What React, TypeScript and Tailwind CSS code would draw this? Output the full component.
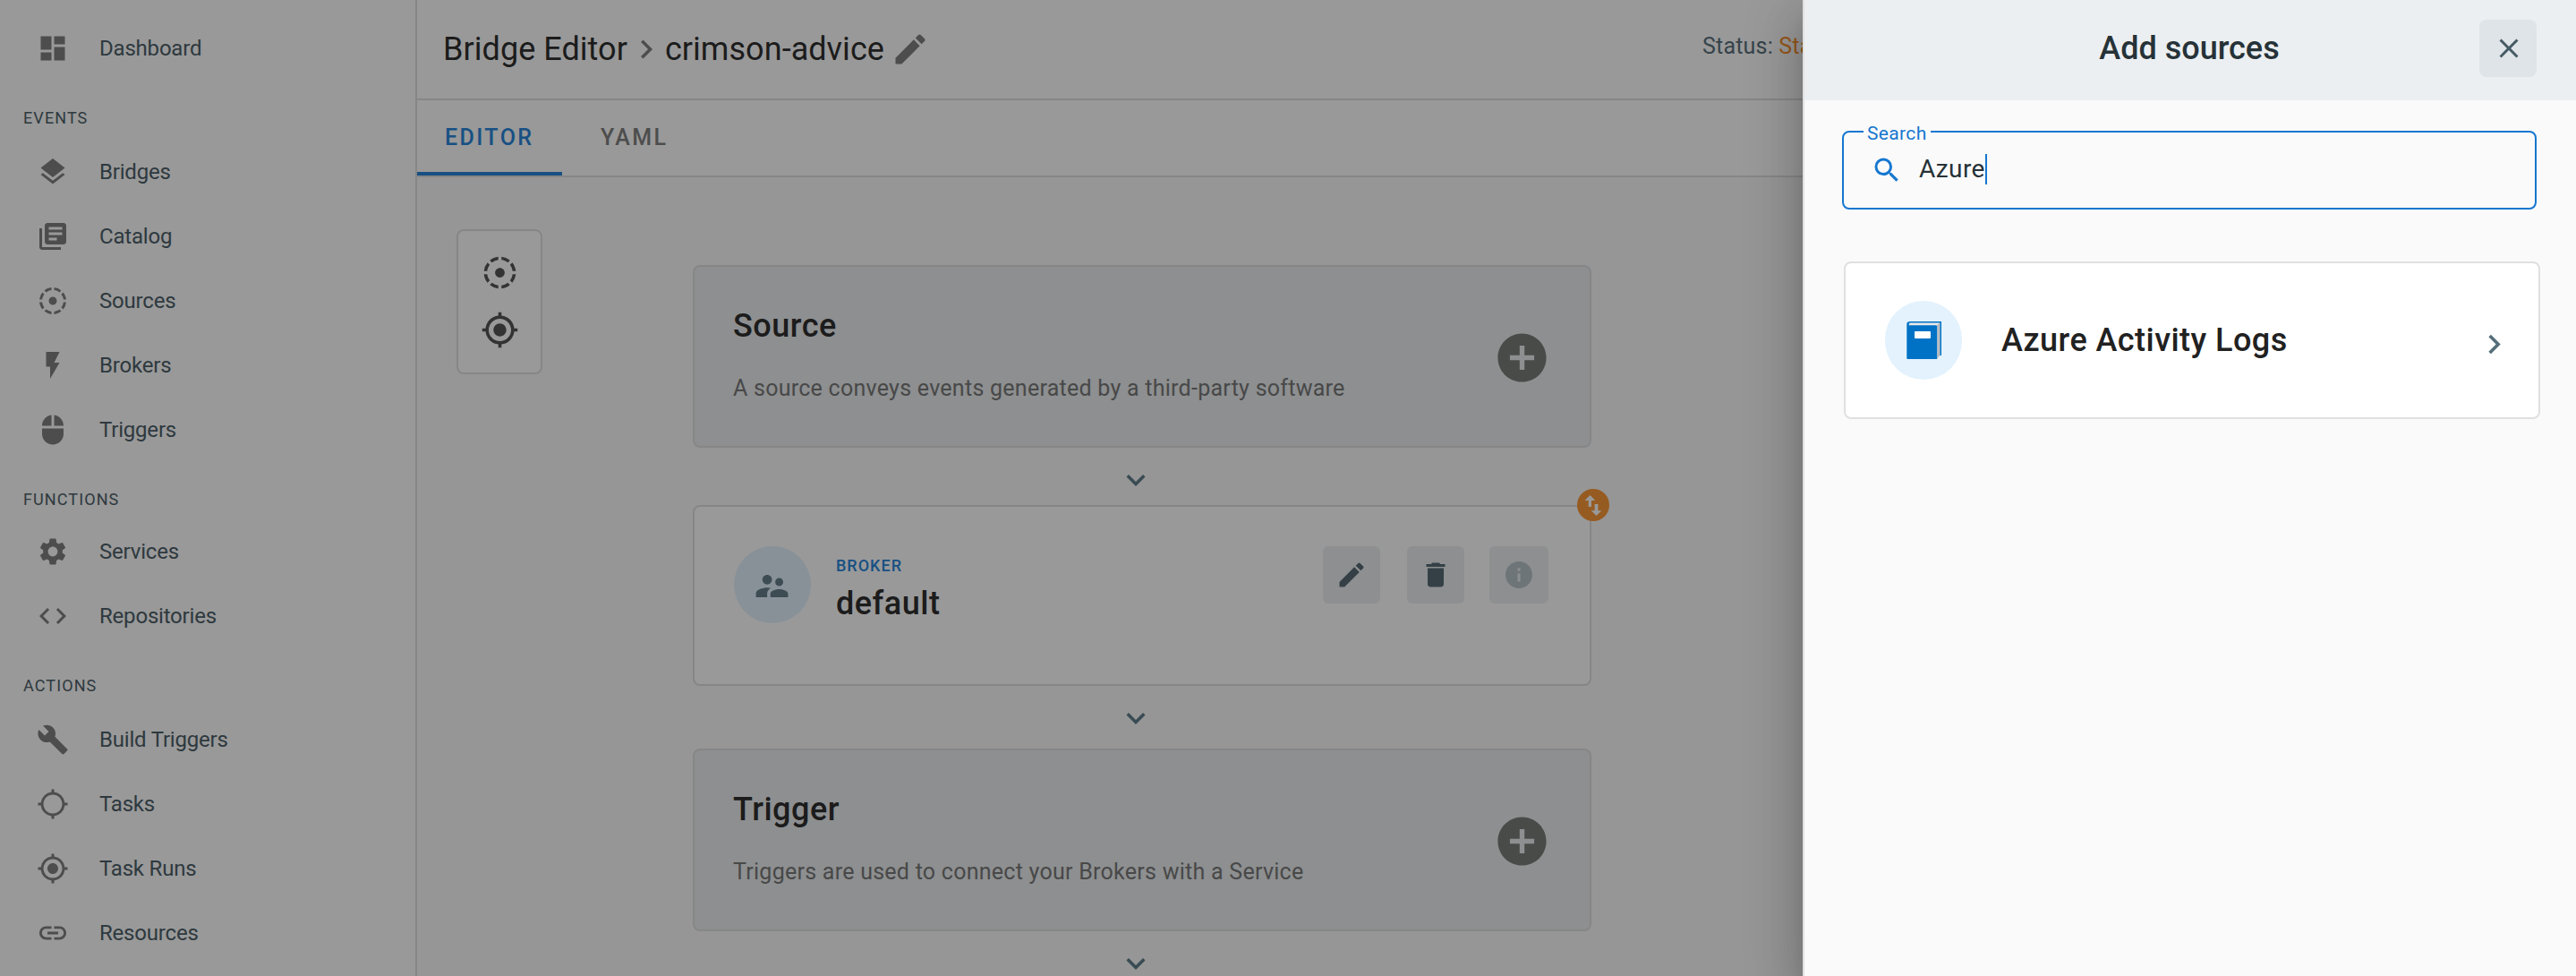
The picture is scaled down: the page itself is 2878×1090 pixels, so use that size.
import React from "react";
import {
  MdAddCircle,
  MdBuild,
  MdCode,
  MdDashboard,
  MdDelete,
  MdEdit,
  MdExpandMore,
  MdChevronRight,
  MdFilterTiltShift,
  MdFlashOn,
  MdGpsFixed,
  MdGpsNotFixed,
  MdInfo,
  MdLayers,
  MdLibraryBooks,
  MdLink,
  MdMouse,
  MdSearch,
  MdSettings,
  MdSupervisorAccount,
  MdClose,
} from "react-icons/md";
import type { IconType } from "react-icons";

type Item = { label: string; icon: IconType };

const topItem: Item = { label: "Dashboard", icon: MdDashboard };

const groups: { title: string; titleClass: string; items: Item[] }[] = [
  {
    title: "EVENTS",
    titleClass: "h-[66px]",
    items: [
      { label: "Bridges", icon: MdLayers },
      { label: "Catalog", icon: MdLibraryBooks },
      { label: "Sources", icon: MdFilterTiltShift },
      { label: "Brokers", icon: MdFlashOn },
      { label: "Triggers", icon: MdMouse },
    ],
  },
  {
    title: "FUNCTIONS",
    titleClass: "h-[64px]",
    items: [
      { label: "Services", icon: MdSettings },
      { label: "Repositories", icon: MdCode },
    ],
  },
  {
    title: "ACTIONS",
    titleClass: "h-[66px]",
    items: [
      { label: "Build Triggers", icon: MdBuild },
      { label: "Tasks", icon: MdGpsNotFixed },
      { label: "Task Runs", icon: MdGpsFixed },
      { label: "Resources", icon: MdLink },
    ],
  },
];

function NavItem({ label, icon: Icon }: Item) {
  return (
    <a className="flex h-[72px] items-center pl-[41px]">
      <Icon className="size-9 text-[#808080]" />
      <span className="ml-[34px] text-[24px] leading-[36px] tracking-[-0.2px] text-[#4d6069]">{label}</span>
    </a>
  );
}

function Sidebar() {
  return (
    <nav className="flex h-full w-[466px] shrink-0 flex-col border-r-2 border-[#e0e0e0] bg-white pt-[18px]">
      <NavItem {...topItem} />
      {groups.map((g) => (
        <section key={g.title}>
          <div className={g.titleClass}>
            <h2 className="pt-[29px] pl-[26px] text-[18px] leading-[26px] tracking-[1.1px] text-[#4d6069]">{g.title}</h2>
          </div>
          {g.items.map((i) => (
            <NavItem key={i.label} {...i} />
          ))}
        </section>
      ))}
    </nav>
  );
}

function Header() {
  return (
    <header className="flex h-[112px] items-center border-b-2 border-[#e0e0e0] bg-white pl-[29px]">
      <h1 className="flex items-center text-[36px] leading-[44px] tracking-[0.05px] text-[#303030]">
        <span>Bridge Editor</span>
        <MdChevronRight className="size-[42px] text-[#808080]" />
        <span>crimson-advice</span>
        <MdEdit className="ml-[7px] size-[44px] text-[#808080]" />
      </h1>
      <p className="mt-[-6px] ml-[863px] text-[25px] leading-[36px] tracking-[0.2px] whitespace-nowrap text-[#5b727d]">
        Status: <span className="text-[#fb9130]">Starting</span>
      </p>
    </header>
  );
}

function Tabs() {
  return (
    <div className="flex h-[86px] border-b-2 border-[#e0e0e0] bg-white text-[25px] leading-[84px] font-medium tracking-[2.4px]">
      <div className="w-[162px] border-b-4 border-[#2886da] pl-[31px] text-[#2886da]">EDITOR</div>
      <div className="pl-[43px] text-[#808080]">YAML</div>
    </div>
  );
}

function EmptyCard({ title, text }: { title: string; text: string }) {
  return (
    <div className="flex h-[204px] w-[1004px] items-center justify-between rounded-[8px] border-2 border-[#e0e0e0] bg-[#eceff1] pr-[43px] pl-[43px]">
      <div className="mt-[-3px]">
        <h3 className="text-[36px] leading-[44px] font-medium tracking-[0.5px] text-[#303030]">{title}</h3>
        <p className="mt-[30px] text-[25px] leading-[36px] tracking-[0.26px] text-[#797979]">{text}</p>
      </div>
      <MdAddCircle className="mt-[2px] size-[65px] text-[#7b7d7b]" />
    </div>
  );
}

function Arrow() {
  return <MdExpandMore className="mr-[14px] size-[42px] text-[#607d8b]" />;
}

function ActionButton({ icon: Icon, muted }: { icon: IconType; muted?: boolean }) {
  return (
    <button
      className={
        muted
          ? "flex h-16 w-[66px] items-center justify-center rounded-[6px] bg-[#eceff1] text-[#b8c4ca]"
          : "flex size-16 items-center justify-center rounded-[6px] bg-[#eceff1] text-[#586c76]"
      }
    >
      <Icon className="size-9" />
    </button>
  );
}

function BrokerCard() {
  return (
    <div className="relative flex h-[202px] w-[1004px] rounded-[8px] border-2 border-[#e0e0e0] bg-white pt-[44px] pr-[46px] pl-[44px]">
      <div className="flex size-[86px] items-center justify-center rounded-full bg-[#e3f2fd]">
        <MdSupervisorAccount className="mt-[3px] mr-[2px] size-[43px] text-[#677f8a]" />
      </div>
      <div className="ml-[28px] pt-[8px]">
        <div className="text-[18px] leading-[28px] font-medium tracking-[1px] text-[#2886da]">BROKER</div>
        <div className="mt-[6px] text-[36px] leading-[44px] font-medium tracking-[0.5px] text-[#303030]">default</div>
      </div>
      <div className="ml-auto flex">
        <ActionButton icon={MdEdit} />
        <div className="ml-[30px] flex gap-[28px]">
          <ActionButton icon={MdDelete} />
          <ActionButton icon={MdInfo} muted />
        </div>
      </div>
      <div className="absolute -top-[20px] -right-[22px] flex size-[36px] items-center justify-center rounded-full bg-[#fb9837]">
        <svg viewBox="0 0 36 36" className="size-[36px]" fill="#ffffff">
          <path d="M14.5 7 8.5 13H12.7V20H16V13H20.3ZM23.4 24.2V17H19.6V24.2H15.6L21.5 30 27.3 24.2Z" />
        </svg>
      </div>
    </div>
  );
}

function Editor() {
  return (
    <main className="relative min-h-0 flex-1 bg-[#fafafa]">
      <div className="absolute top-[58px] left-[44px] flex h-[162px] w-[96px] flex-col items-center gap-[21px] rounded-[8px] border-2 border-[#e0e0e0] bg-white pt-[25px] text-[#555555]">
        <MdFilterTiltShift className="size-[43px]" />
        <MdGpsFixed className="size-[43px]" />
      </div>
      <div className="ml-[308px] flex w-[1004px] flex-col items-center pt-[98px]">
        <EmptyCard title="Source" text="A source conveys events generated by a third-party software" />
        <div className="flex h-16 items-center pt-[8px]">
          <Arrow />
        </div>
        <BrokerCard />
        <div className="flex h-[70px] items-center pt-[2px]">
          <Arrow />
        </div>
        <EmptyCard title="Trigger" text="Triggers are used to connect your Brokers with a Service" />
        <div className="flex h-[50px] shrink-0 items-start overflow-hidden pt-[15px]">
          <Arrow />
        </div>
      </div>
    </main>
  );
}

function BookIcon() {
  return (
    <svg viewBox="0 0 39 42" className="h-[42px] w-[39px]">
      <path d="M3 0H39V38H36L2 4Z" fill="#0072c6" />
      <path d="M3.5 1.5H37.3V38L35 41.5H33V4.5H2.5Z" fill="#e8e8e8" />
      <path d="M34.4 4 37.3 1.5V38L34.4 41.5Z" fill="#b8babc" />
      <path d="M3 0C1 0.4 0.3 1.6 0.3 3.2V40.5C0.3 41.5 0.8 42 1.8 42H34.2V4.6H3.6C2.4 4.6 2 4 2.6 3.2Z" fill="#0072c6" />
      <rect x="9" y="11" width="18" height="8" rx="1" fill="#ffffff" />
    </svg>
  );
}

function Panel() {
  return (
    <aside className="absolute inset-y-0 right-0 flex w-[864px] flex-col border-l-2 border-[#e0e0e0] bg-[#fafafa] shadow-[0_16px_20px_-10px_rgba(0,0,0,0.2),0_32px_48px_4px_rgba(0,0,0,0.14),0_12px_60px_10px_rgba(0,0,0,0.12)]">
      <div className="flex h-[112px] items-center bg-[#eceff1] pr-[44px] pb-[4px]">
        <h2 className="ml-[106px] flex-1 text-center text-[36px] leading-[44px] font-medium text-[#263238]">Add sources</h2>
        <button className="flex size-16 items-center justify-center rounded-[8px] bg-[#dfe4e8] text-[#455a64]">
          <MdClose className="ml-px size-[36px]" />
        </button>
      </div>
      <div className="relative mt-[34px] ml-[42px] flex h-[88px] w-[776px] items-center rounded-[8px] border-2 border-[#1577d0] pl-[30px]">
        <label className="absolute -top-[14px] left-[22px] bg-[#fafafa] px-[4px] text-[21px] leading-[30px] tracking-[0.35px] text-[#1577d0]">
          Search
        </label>
        <MdSearch className="mt-[-1px] size-[36px] text-[#1577d0]" />
        <span className="mt-[-3px] ml-[18px] text-[28px] leading-[34px] tracking-[0.4px] text-[#263238]">Azure</span>
        <span className="mt-[-2px] h-[34px] w-[2px] bg-[#1577d0]" />
      </div>
      <div className="mt-[58px] ml-[44px] flex h-[176px] w-[778px] items-center rounded-[8px] border-2 border-[#e0e0e0] bg-white pl-[44px]">
        <div className="flex h-[88px] w-[86px] items-center justify-center rounded-full bg-[#e3f2fd]">
          <BookIcon />
        </div>
        <div className="ml-[44px] text-[36px] leading-[44px] font-medium tracking-[0.45px] text-[#212121]">Azure Activity Logs</div>
        <MdChevronRight className="mt-[8px] mr-[28px] ml-auto size-[43px] text-[#546e7a]" />
      </div>
    </aside>
  );
}

export default function App() {
  return (
    <div className="relative flex h-[1090px] w-[2878px] overflow-hidden bg-white font-[Roboto,sans-serif]">
      <Sidebar />
      <div className="flex min-w-0 flex-1 flex-col">
        <Header />
        <Tabs />
        <Editor />
      </div>
      <div className="absolute inset-0 bg-black/40" />
      <Panel />
    </div>
  );
}
